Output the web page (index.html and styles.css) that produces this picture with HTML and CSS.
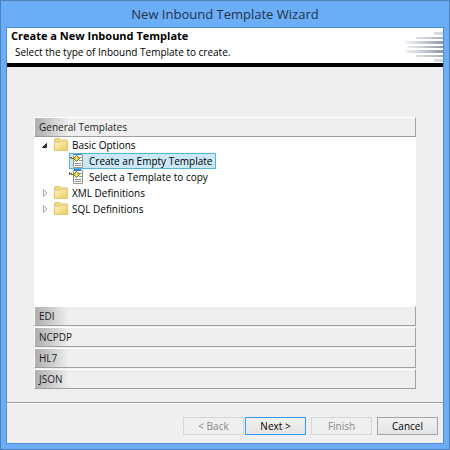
FILE: index.html
```html
<!DOCTYPE html>
<html lang="en">
<head>
    <meta charset="UTF-8">
    <meta name="viewport" content="width=device-width, initial-scale=1.0">
    <title>New Inbound Template Wizard</title>
    <link rel="stylesheet" href="styles.css">
</head>
<body>

<!-- Shared icons -->
<svg class="icon-defs" aria-hidden="true">
    <defs>
        <linearGradient id="folder-fill" x1="0" y1="0" x2="1" y2="1">
            <stop offset="0" stop-color="#fff3bd"/>
            <stop offset="1" stop-color="#eccb62"/>
        </linearGradient>
        <linearGradient id="stripe-fill" gradientUnits="userSpaceOnUse" x1="0" y1="0" x2="40" y2="0">
            <stop offset="0" stop-color="#a0a9b8" stop-opacity="0.1"/>
            <stop offset="1" stop-color="#8e99aa"/>
        </linearGradient>
    </defs>
    <symbol id="icon-folder" viewBox="0 0 16 16">
        <path d="M1.5 13V2.500q0-1 1-1h4l1.500 1.500h5.500q1 0 1 1V13z" fill="#f3dc8c" stroke="#e0c268"/>
        <path d="M8 3.500h5.500v2H8z" fill="#fffdf0"/>
        <path d="M1.500 13.500V5.500q0-.5.5-.5h5l1-1h6q.5 0 .5.500v9z" fill="url(#folder-fill)" stroke="#e3c56f"/>
    </symbol>
    <symbol id="icon-template" viewBox="0 0 16 16">
        <path d="M4.500 1.500h9v13h-9z" fill="#fdfdf8" stroke="#9a988a"/>
        <path d="M5 0h7v2H5z" fill="#2f7fd0"/>
        <path d="M10 4.500h3M10 7.500h3M6 10.500h6M6 12.500h6" stroke="#8d96a8"/>
        <path d="M0 4.500h2M3 5.500h2M.5 3v3M2.500 4v2" stroke="#6b674c"/>
        <path d="M7.500 2.500l3 3-3 3-3-3z" fill="#e5c83c" stroke="#827016"/>
        <path d="M7 4h1v3H7z" fill="#fff6a0"/>
    </symbol>
    <symbol id="icon-open" viewBox="0 0 8 8">
        <path d="M5.500 2.500v4h-4z" fill="#404040" stroke="#262626"/>
    </symbol>
    <symbol id="icon-closed" viewBox="0 0 8 8">
        <path d="M2.500 .5l3.500 3.500-3.500 3.500z" fill="#fff" stroke="#a6a6a6"/>
    </symbol>
</svg>

<div class="window">
    <h1 class="window-title">New Inbound Template Wizard</h1>

    <div class="dialog">
        <header class="banner">
            <div>
                <h2>Create a New Inbound Template</h2>
                <p>Select the type of Inbound Template to create.</p>
            </div>
            <svg class="stripes" viewBox="0 0 40 32" aria-hidden="true">
                <g fill="url(#stripe-fill)">
                    <rect x="31" y="1" width="9" height="3" opacity="0.4"/>
                    <rect x="13" y="6" width="27" height="2" opacity="0.8"/>
                    <rect x="2" y="10" width="38" height="3"/>
                    <rect x="4" y="15" width="36" height="2"/>
                    <rect x="2" y="19" width="38" height="3"/>
                    <rect x="13" y="24" width="27" height="2" opacity="0.8"/>
                    <rect x="31" y="28" width="9" height="3" opacity="0.4"/>
                </g>
            </svg>
        </header>

        <main class="content">
            <div class="accordion">
                <button type="button" class="section" aria-expanded="true">General Templates</button>
                <ul class="tree">
                    <li>
                        <div class="row">
                            <button type="button" class="toggle" aria-label="Collapse Basic Options"><svg><use href="#icon-open"/></svg></button>
                            <svg class="icon"><use href="#icon-folder"/></svg>
                            <span class="label">Basic Options</span>
                        </div>
                        <ul class="children">
                            <li>
                                <button type="button" class="row leaf selected">
                                    <svg class="icon"><use href="#icon-template"/></svg>
                                    <span class="label">Create an Empty Template</span>
                                </button>
                            </li>
                            <li>
                                <button type="button" class="row leaf">
                                    <svg class="icon"><use href="#icon-template"/></svg>
                                    <span class="label">Select a Template to copy</span>
                                </button>
                            </li>
                        </ul>
                    </li>
                    <li class="row">
                        <button type="button" class="toggle" aria-label="Expand XML Definitions"><svg><use href="#icon-closed"/></svg></button>
                        <svg class="icon"><use href="#icon-folder"/></svg>
                        <span class="label">XML Definitions</span>
                    </li>
                    <li class="row">
                        <button type="button" class="toggle" aria-label="Expand SQL Definitions"><svg><use href="#icon-closed"/></svg></button>
                        <svg class="icon"><use href="#icon-folder"/></svg>
                        <span class="label">SQL Definitions</span>
                    </li>
                </ul>
                <button type="button" class="section">EDI</button>
                <button type="button" class="section">NCPDP</button>
                <button type="button" class="section">HL7</button>
                <button type="button" class="section">JSON</button>
            </div>
        </main>

        <footer class="actions">
            <div class="steps">
                <button type="button" class="btn" disabled>&lt; Back</button>
                <button type="button" class="btn btn-default">Next &gt;</button>
            </div>
            <button type="button" class="btn" disabled>Finish</button>
            <button type="button" class="btn">Cancel</button>
        </footer>
    </div>
</div>

</body>
</html>
```
FILE: styles.css
```css
* {
    margin: 0;
    padding: 0;
    box-sizing: border-box;
}

body {
    font-family: "Open Sans", "Noto Sans", sans-serif;
    font-size: 10px;
    line-height: 16px;
    color: #000;
}

button {
    font: inherit;
    color: inherit;
}

ul {
    list-style: none;
}

.icon-defs {
    display: block;
    width: 0;
    height: 0;
}

/* Window frame */
.window {
    display: flex;
    flex-direction: column;
    height: 100vh;
    padding: 0 5px 5px;
    background: #6badf6;
    border: 1px solid #4b82be;
}

.window-title {
    padding: 3px 0;
    font-size: 13px;
    font-weight: 400;
    line-height: 20px;
    text-align: center;
    color: #243447;
}

.dialog {
    flex: 1;
    display: flex;
    flex-direction: column;
    min-height: 0;
    background: #efefef;
    border: 1px solid #4f8fda;
}

/* Banner */
.banner {
    display: flex;
    justify-content: space-between;
    background: #fff;
    border-bottom: 4px solid #000;
}

.banner h2 {
    padding-left: 4px;
    font-size: 11px;
    font-weight: 700;
}

.banner p {
    padding: 0 0 3px 8px;
}

.stripes {
    width: 40px;
    height: 32px;
    margin-top: 3px;
}

/* Accordion */
.content {
    flex: 1;
    display: flex;
    min-height: 0;
    padding: 50px 27px 13px;
    border-bottom: 1px solid #9d9d9d;
}

.accordion {
    flex: 1;
    display: flex;
    flex-direction: column;
}

.section {
    height: 20px;
    padding-left: 4px;
    line-height: 18px;
    text-align: left;
    color: #1c1c1c;
    background: linear-gradient(to right, #aeaeae, #efefef 34px);
    border: 1px solid #a0a0a0;
    border-top-color: #fff;
    border-left-color: #fff;
}

.section + .section {
    margin-top: 1px;
}

/* Template tree */
.tree {
    flex: 1;
    background: #fff;
    padding-left: 6px;
}

.row {
    display: flex;
    align-items: center;
    height: 16px;
}

.toggle {
    width: 10px;
    height: 16px;
    margin-right: 3px;
    background: none;
    border: 0;
}

.toggle svg {
    display: block;
    width: 8px;
    height: 8px;
    margin: 0 auto;
}

.icon {
    width: 16px;
    height: 16px;
}

.label {
    padding: 0 3px;
}

.children {
    padding-left: 29px;
}

.leaf {
    background: none;
    border: 0;
}

.leaf.selected {
    background: #cbe8f6;
    outline: 1px solid #53b4e0;
    outline-offset: -1px;
}

.leaf .label {
    padding-left: 4px;
}

/* Buttons */
.actions {
    display: flex;
    justify-content: flex-end;
    gap: 5px;
    padding: 13px 5px 8px;
    border-top: 1px solid #fff;
}

.steps {
    display: flex;
    gap: 1px;
}

.btn {
    width: 61px;
    height: 18px;
    line-height: 16px;
    background: linear-gradient(#f2f2f2, #e4e4e4);
    border: 1px solid #a6a6a6;
}

.btn-default {
    border-color: #3399ff;
}

.btn:disabled {
    color: #8a8a8a;
    background: #efefef;
    border-color: #d6d6d6;
}
```
